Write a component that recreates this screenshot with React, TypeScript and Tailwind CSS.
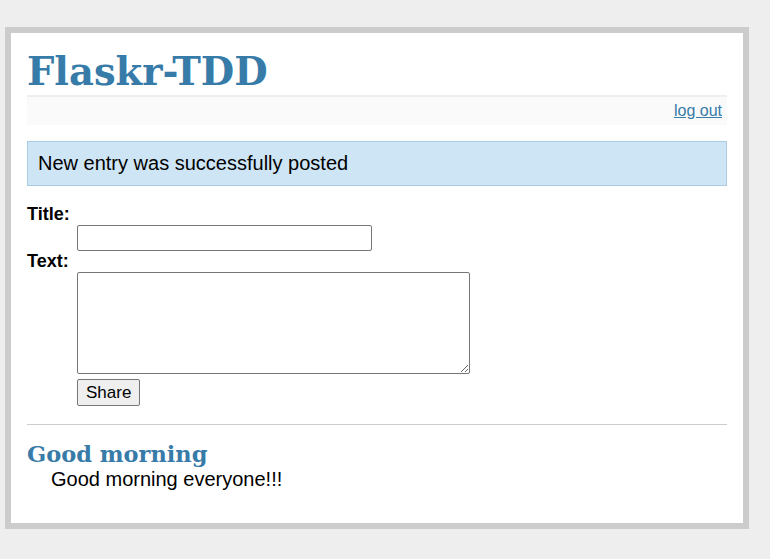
export default function App() {
  return (
    <div className="min-h-[559px] bg-[#eeeeee] pt-[27px] pl-[5px] pb-[31px] font-['Liberation_Sans',Arial,sans-serif] text-[20px] text-black">
      <div className="w-[744px] border-[6px] border-[#cccccc] bg-white p-4">
        {/* header */}
        <h1 className="border-b-[2.5px] border-[#eeeeee] font-['DejaVu_Serif',Georgia,serif] text-[38.5px] font-bold leading-[46px] text-[#377ba8]">
          Flaskr-TDD
        </h1>
        <div className="mb-4 bg-[#fafafa] px-[5px] py-[5px] text-right text-[16px] leading-[18px]">
          <a href="#" className="text-[#377ba8] underline">
            log out
          </a>
        </div>

        <div className="border border-[#aacbe2] bg-[#cee5f5] px-[10px] py-[10px] leading-[23px]">
          New entry was successfully posted
        </div>

        {/* add entry form */}
        <form className="border-b border-[#cccccc] text-[18px]">
          <dl className="my-[18px] font-bold leading-[21px]">
            <dt>Title:</dt>
            <dd className="ml-[50px]">
              <input
                type="text"
                className="block h-[26px] w-[295px] rounded-[2px] border border-[#767676] px-1 font-normal"
              />
            </dd>
            <dt>Text:</dt>
            <dd className="ml-[50px]">
              <textarea className="block h-[102px] w-[393px] rounded-[2px] border border-[#767676] font-normal" />
            </dd>
            <dd className="ml-[50px] mt-[5px]">
              <button
                type="button"
                className="h-[27px] rounded-[2px] border border-[#767676] bg-[#efefef] px-[8px] text-[17px] leading-[20px] font-normal"
              >
                Share
              </button>
            </dd>
          </dl>
        </form>

        {/* entries */}
        <ul className="m-0 list-none p-0">
          <li className="mx-6 my-4 leading-[23px]">
            <h2 className="-ml-6 font-['DejaVu_Serif',Georgia,serif] text-[22.5px] font-bold leading-[27px] text-[#377ba8]">
              Good morning
            </h2>
            Good morning everyone!!!
          </li>
        </ul>
      </div>
    </div>
  );
}
